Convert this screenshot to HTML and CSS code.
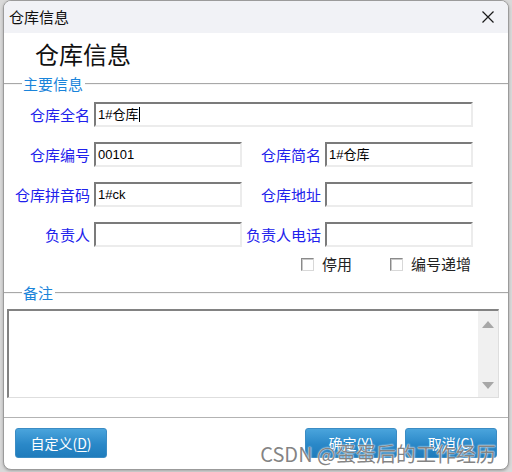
FILE: index.html
```html
<!DOCTYPE html>
<html>
<head>
<meta charset="utf-8">
<link rel="stylesheet" href="styles.css">
</head>
<body>
<div class="window">
  <div class="titlebar">
    <span class="title">仓库信息</span>
    <svg class="close" width="14" height="14" viewBox="0 0 14 14"><path d="M1.5 1.5 L12.5 12.5 M12.5 1.5 L1.5 12.5" stroke="#1a1a1a" stroke-width="1.2" fill="none"/></svg>
  </div>
  <div class="content">
    <div class="heading">仓库信息</div>

    <div class="group-head"><span class="gline short"></span><span class="glabel">主要信息</span><span class="gline grow"></span></div>

    <div class="form">
      <div class="lbl">仓库全名</div>
      <div class="field wide">1#仓库<span class="caret"></span></div>

      <div class="lbl">仓库编号</div>
      <div class="field">00101</div>
      <div class="lbl">仓库简名</div>
      <div class="field">1#仓库</div>

      <div class="lbl">仓库拼音码</div>
      <div class="field">1#ck</div>
      <div class="lbl">仓库地址</div>
      <div class="field"></div>

      <div class="lbl">负责人</div>
      <div class="field"></div>
      <div class="lbl">负责人电话</div>
      <div class="field"></div>
    </div>

    <div class="checks">
      <div class="check"><span class="box"></span><span class="clabel">停用</span></div>
      <div class="check second"><span class="box"></span><span class="clabel">编号递增</span></div>
    </div>

    <div class="group-head g2"><span class="gline short"></span><span class="glabel">备注</span><span class="gline grow"></span></div>

    <div class="memo">
      <div class="memo-text"></div>
      <div class="scroll">
        <span class="arrow up"></span>
        <span class="arrow down"></span>
      </div>
    </div>
  </div>
  <div class="footer">
    <div class="btn">自定义(<u>D</u>)</div>
    <div class="spacer"></div>
    <div class="btn">确定(<u>Y</u>)</div>
    <div class="btn">取消(<u>C</u>)</div>
    <div class="watermark">CSDN @蛋蛋后的工作经历</div>
  </div>
</div>
</body>
</html>
```
FILE: styles.css
```css
html, body {
  margin: 0;
  padding: 0;
}
body {
  width: 512px;
  height: 472px;
  background: #d9d9d9;
  font-family: "Noto Sans CJK SC", "Liberation Sans", sans-serif;
  overflow: hidden;
}
.window {
  margin-left: 3px;
  width: 506px;
  height: 470px;
  box-sizing: border-box;
  border: 1px solid #9b9b9b;
  border-radius: 8px;
  background: #ffffff;
  overflow: hidden;
  display: flex;
  flex-direction: column;
  box-shadow: 0 1px 3px rgba(0,0,0,0.25);
}
.titlebar {
  height: 32px;
  background: #f1f2f6;
  display: flex;
  align-items: center;
  padding-left: 5px;
  padding-right: 13px;
  flex-shrink: 0;
}
.title {
  font-size: 15px;
  color: #111;
  line-height: 18px;
  flex: 1;
}
.close {
  display: block;
}
.content {
  display: flex;
  flex-direction: column;
}
.heading {
  margin-top: 7px;
  padding-left: 31px;
  font-size: 24px;
  line-height: 28px;
  color: #111;
}
.group-head {
  margin-top: 8px;
  height: 16px;
  display: flex;
  align-items: center;
}
.group-head.g2 {
  margin-top: 13px;
}
.gline {
  height: 1px;
  background: #a8a8a8;
  border-bottom: 1px solid #f4f4f4;
}
.gline.short {
  width: 18px;
}
.gline.grow {
  flex: 1;
  margin-left: 2px;
}
.glabel {
  font-size: 15px;
  line-height: 16px;
  color: #1a84da;
  padding-left: 1px;
}
.form {
  margin-top: 10px;
  display: grid;
  grid-template-columns: 86px 148px 75px 148px;
  grid-auto-rows: 25px;
  column-gap: 4px;
  row-gap: 15px;
}
.lbl {
  font-size: 15px;
  color: #2121ec;
  text-align: right;
  align-self: center;
  line-height: 18px;
  white-space: nowrap;
}
.field {
  box-sizing: border-box;
  border-top: 2px solid #7b7b7b;
  border-left: 2px solid #7b7b7b;
  border-right: 2px solid #ececec;
  border-bottom: 2px solid #ececec;
  background: #fff;
  font-family: "Liberation Sans", "Noto Sans CJK SC", sans-serif;
  font-size: 13px;
  line-height: 19px;
  color: #000;
  padding-left: 2px;
  display: flex;
  align-items: center;
}
.field.wide {
  grid-column: 2 / 5;
}
.caret {
  display: inline-block;
  width: 1px;
  height: 15px;
  background: #000;
  margin-left: 1px;
}
.checks {
  margin-top: 9px;
  height: 16px;
  display: flex;
  align-items: center;
  padding-left: 297px;
}
.check {
  display: flex;
  align-items: center;
}
.check.second {
  margin-left: 38px;
}
.box {
  width: 13px;
  height: 13px;
  box-sizing: border-box;
  border-top: 1px solid #8a8a8a;
  border-left: 1px solid #8a8a8a;
  border-right: 1px solid #d8d8d8;
  border-bottom: 1px solid #d8d8d8;
  background: #fff;
  box-shadow: inset 1px 1px 0 #c8c8c8;
}
.clabel {
  margin-left: 8px;
  font-size: 15px;
  line-height: 18px;
  color: #222;
}
.memo {
  margin-top: 8px;
  margin-left: 3px;
  width: 492px;
  height: 89px;
  box-sizing: border-box;
  border-top: 2px solid #828282;
  border-left: 2px solid #828282;
  border-right: 1px solid #dedede;
  border-bottom: 1px solid #dedede;
  display: flex;
}
.memo-text {
  flex: 1;
  background: #fff;
}
.scroll {
  width: 20px;
  background: #f0f0f0;
  display: flex;
  flex-direction: column;
  align-items: center;
  justify-content: space-between;
  padding: 10px 0 8px;
}
.arrow {
  width: 0;
  height: 0;
  border-left: 6px solid transparent;
  border-right: 6px solid transparent;
}
.arrow.up {
  border-bottom: 7px solid #a7a7a7;
}
.arrow.down {
  border-top: 7px solid #a7a7a7;
}
.footer {
  margin-top: 19px;
  border-top: 1px solid #b3b3b3;
  padding: 10px 11px 0 11px;
  display: flex;
  gap: 8px;
  position: relative;
  flex: 1;
}
.spacer {
  flex: 1;
}
.btn {
  width: 92px;
  height: 30px;
  box-sizing: border-box;
  border: 1px solid #3b8cc4;
  border-radius: 3px;
  background: linear-gradient(#4aa4dc, #2a88c8 55%, #1f7cbc);
  color: #fff;
  font-size: 14px;
  line-height: 28px;
  text-align: center;
}
.btn u {
  text-underline-offset: 2px;
}
.watermark {
  position: absolute;
  right: 12px;
  bottom: 2px;
  font-size: 20px;
  line-height: 26px;
  color: rgba(110,110,110,0.85);
  text-shadow: 0 0 1px #fff, 0 0 2px #fff;
  white-space: nowrap;
}
```
